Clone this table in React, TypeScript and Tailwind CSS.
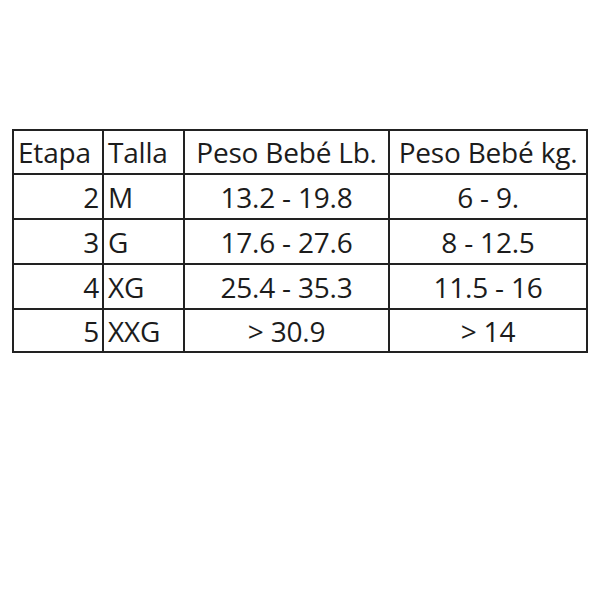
const rows = [
  { etapa: '2', talla: 'M', lb: '13.2 - 19.8', kg: '6 - 9.' },
  { etapa: '3', talla: 'G', lb: '17.6 - 27.6', kg: '8 - 12.5' },
  { etapa: '4', talla: 'XG', lb: '25.4 - 35.3', kg: '11.5 - 16' },
  { etapa: '5', talla: 'XXG', lb: '> 30.9', kg: '> 14' },
];

export default function App() {
  return (
    <div className="w-[600px] h-[600px] bg-white pt-[129px] pl-[12px] font-['Open_Sans',sans-serif] text-[#1c1c1c]">
      <table className="border-collapse border-2 border-[#222] text-[28px] leading-none table-fixed w-[574px] tracking-[-0.2px]">
        <colgroup>
          <col className="w-[90px]" />
          <col className="w-[81px]" />
          <col className="w-[205px]" />
          <col className="w-[198px]" />
        </colgroup>
        <thead>
          <tr className="h-[44px]">
            <th className="border-2 border-[#222] font-medium pl-[4px] pr-0 text-left whitespace-nowrap">Etapa</th>
            <th className="border-2 border-[#222] font-medium pl-[4px] pr-0 text-left whitespace-nowrap">Talla</th>
            <th className="border-2 border-[#222] font-medium px-0 text-center whitespace-nowrap">Peso Bebé Lb.</th>
            <th className="border-2 border-[#222] font-medium px-0 text-center whitespace-nowrap">Peso Bebé kg.</th>
          </tr>
        </thead>
        <tbody>
          {rows.map((r, i) => (
            <tr key={r.etapa} className={i === 3 ? 'h-[43px] font-medium' : 'h-[45px] font-medium'}>
              <td className="border-2 border-[#222] pr-[3px] text-right">{r.etapa}</td>
              <td className="border-2 border-[#222] pl-[4px] text-left whitespace-nowrap">{r.talla}</td>
              <td className="border-2 border-[#222] px-0 text-center whitespace-nowrap">{r.lb}</td>
              <td className="border-2 border-[#222] px-0 text-center whitespace-nowrap">{r.kg}</td>
            </tr>
          ))}
        </tbody>
      </table>
    </div>
  );
}
